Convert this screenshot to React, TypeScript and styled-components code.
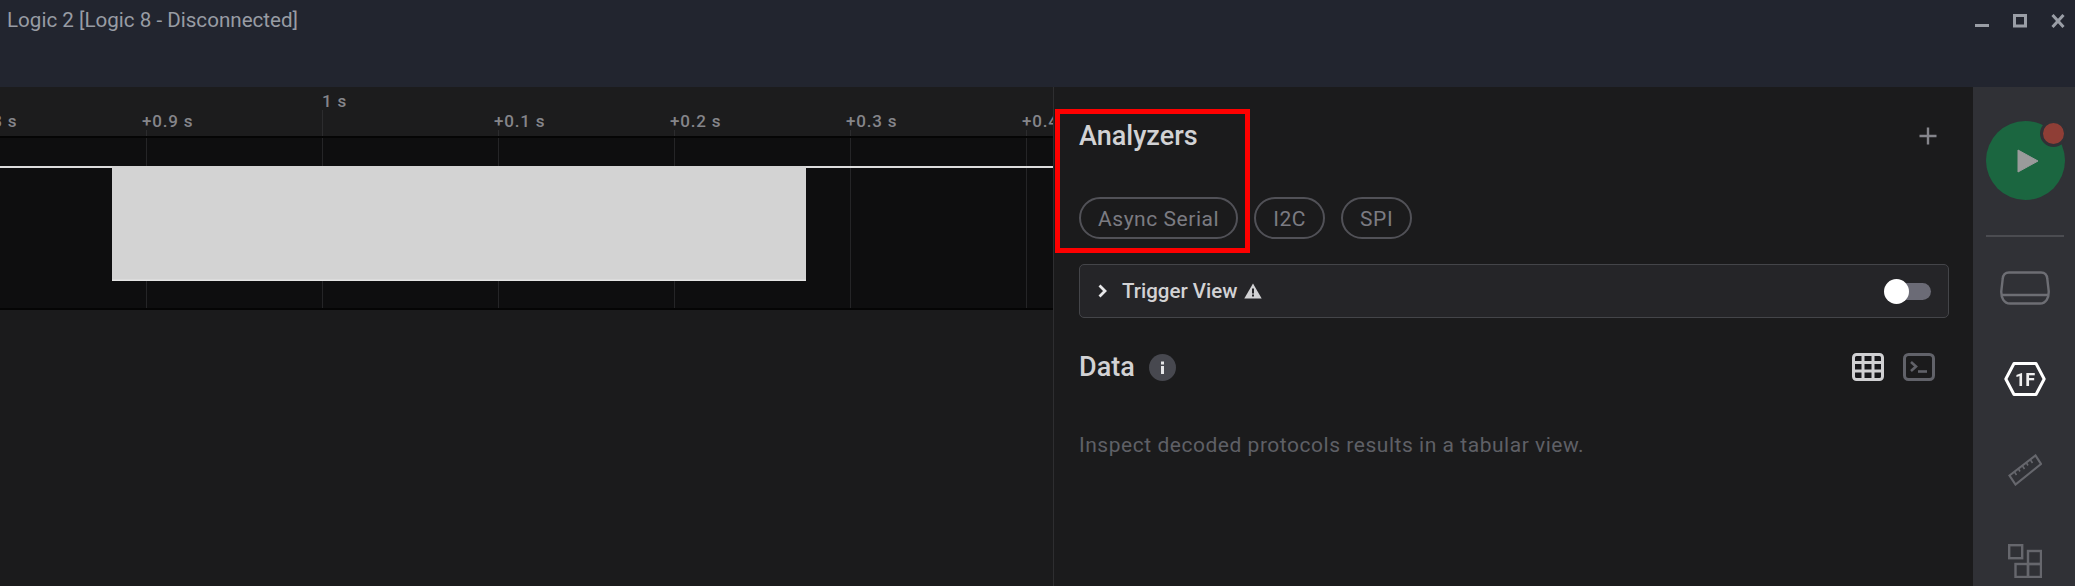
import React from "react";
import styled, { createGlobalStyle } from "styled-components";

const Global = createGlobalStyle`
  html, body { margin: 0; padding: 0; height: 586px; overflow: hidden; background: #1b1b1c; }
  #root { height: 586px; }
  * { box-sizing: border-box; }
`;

const Page = styled.div`
  width: 2075px;
  height: 586px;
  display: grid;
  grid-template-rows: 87px 1fr;
  font-family: Roboto, "Liberation Sans", sans-serif;
  filter: blur(0.4px);
`;

const TitleBar = styled.header`
  background: #22252f;
  display: flex;
  align-items: flex-start;
  justify-content: space-between;
  padding: 8px 10px 0 7px;
`;

const AppTitle = styled.div`
  font-size: 20.6px;
  line-height: 24px;
  color: #989ca4;
`;

const WindowControls = styled.div`
  display: flex;
  gap: 24px;
  padding-top: 6px;
`;

const Body = styled.div`
  display: grid;
  grid-template-columns: 1053px 1fr 102px;
  min-height: 0;
`;

const Timeline = styled.section`
  background: #1b1b1c;
  overflow: hidden;
`;

const Ruler = styled.div`
  position: relative;
  height: 49px;
  background: #1c1c1d;
`;

const TickLabel = styled.span<{ $major?: boolean }>`
  position: absolute;
  top: ${(p) => (p.$major ? "4px" : "24px")};
  font-size: 17px;
  font-weight: 500;
  line-height: 20px;
  letter-spacing: 0.8px;
  color: #85858a;
  white-space: nowrap;
`;

const Tick = styled.i<{ $major?: boolean }>`
  position: absolute;
  bottom: 0;
  width: 1px;
  height: ${(p) => (p.$major ? "26px" : "6px")};
  background: #2c2c2e;
`;

const Channel = styled.div`
  height: 174px;
  background: #0e0e0f;
  border-top: 2px solid #050505;
  border-bottom: 2px solid #050505;
  line-height: 0;
`;

const Analysis = styled.section`
  position: relative;
  background: #1b1b1c;
  border-left: 1px solid #2e2e30;
  padding: 0 24px 0 25px;
`;

const Highlight = styled.div`
  position: absolute;
  left: 1px;
  top: 22px;
  width: 195px;
  height: 144px;
  border: 5px solid #fe0000;
  pointer-events: none;
`;

const HeadingRow = styled.div`
  display: flex;
  align-items: center;
  justify-content: space-between;
  height: 44px;
  margin-top: 27px;
`;

const Heading = styled.h2`
  margin: 0;
  font-size: 27px;
  line-height: 34px;
  font-weight: 500;
  color: #d2d2d4;
`;

const AddButton = styled.button`
  width: 18px;
  height: 18px;
  margin-right: 12px;
  padding: 0;
  border: 0;
  background: none;
  line-height: 0;
`;

const Pills = styled.div`
  display: flex;
  gap: 16px;
  margin-top: 39px;
`;

const Pill = styled.span`
  height: 42px;
  padding: 1px 17px 0;
  display: flex;
  align-items: center;
  border: 2px solid #515157;
  border-radius: 21px;
  font-size: 21px;
  color: #7b7b82;
  letter-spacing: 0.55px;
`;

const TriggerCard = styled.div`
  display: flex;
  align-items: center;
  height: 54px;
  margin-top: 25px;
  padding: 0 17px 0 18px;
  background: #252528;
  border: 1.5px solid #444549;
  border-radius: 5px;
`;

const TriggerLabel = styled.span`
  margin-left: 15px;
  font-size: 20.5px;
  font-weight: 500;
  color: #d2d2d4;
`;

const TriggerIcon = styled.span`
  margin-left: 7px;
  line-height: 0;
`;

const Toggle = styled.span`
  position: relative;
  margin-left: auto;
  width: 35px;
  height: 17px;
  border-radius: 9px;
  background: #6b6b76;
`;

const Knob = styled.span`
  position: absolute;
  left: -12px;
  top: -4px;
  width: 25px;
  height: 25px;
  border-radius: 50%;
  background: #fff;
`;

const DataRow = styled.div`
  display: flex;
  align-items: center;
  margin-top: 28px;
  height: 42px;
`;

const InfoBadge = styled.span`
  margin-left: 14px;
  line-height: 0;
`;

const DataTools = styled.div`
  margin-left: auto;
  margin-right: 14px;
  display: flex;
  gap: 19px;
  line-height: 0;
`;

const Hint = styled.p`
  margin: 44px 0 0;
  font-size: 21px;
  line-height: 26px;
  color: #5f6066;
  letter-spacing: 0.53px;
`;

const Sidebar = styled.nav`
  background: #303136;
  display: flex;
  flex-direction: column;
  align-items: center;
  padding-top: 34px;
`;

const RunButton = styled.button`
  position: relative;
  flex: none;
  width: 79px;
  height: 79px;
  margin-left: 2px;
  padding: 0 0 0 6px;
  border: 0;
  border-radius: 50%;
  background: #1b6640;
  line-height: 0;
`;

const StatusDot = styled.span`
  position: absolute;
  top: -1px;
  right: -2px;
  width: 27px;
  height: 27px;
  border-radius: 50%;
  background: #8f3e36;
  border: 3px solid #303136;
`;

const Divider = styled.hr`
  flex: none;
  width: 78px;
  height: 1.5px;
  margin: 35px 0 34px 2px;
  border: 0;
  background: #4b4c51;
`;

const NavIcons = styled.div`
  display: flex;
  flex-direction: column;
  align-items: center;
  gap: 57px;
  margin-left: 2px;
`;

const NavSlot = styled.span`
  height: 34px;
  display: flex;
  align-items: center;
  justify-content: center;
`;

const TICK_START = 146;
const TICK_STEP = 176;
const ticks = [
  { label: "+0.8 s", i: -1 },
  { label: "+0.9 s", i: 0 },
  { label: "1 s", i: 1, major: true },
  { label: "+0.1 s", i: 2 },
  { label: "+0.2 s", i: 3 },
  { label: "+0.3 s", i: 4 },
  { label: "+0.4 s", i: 5 },
];

const Waveform = () => (
  <svg width="1053" height="170" viewBox="0 0 1053 170">
    {ticks.filter((t) => t.i >= 0).map((t) => (
      <rect key={t.i} x={TICK_START + t.i * TICK_STEP} y="0" width="1" height="170" fill="#252527" />
    ))}
    <rect x="0" y="28" width="1053" height="2" fill="#dcdcdc" />
    <rect x="112" y="28" width="694" height="115" fill="#d3d3d3" />
    <rect x="112" y="141.5" width="694" height="1.5" fill="#e4e4e4" />
  </svg>
);

const Minimize = () => (
  <svg width="14" height="14" viewBox="0 0 14 14"><rect x="0" y="10" width="14" height="3" fill="#9a9ea6" /></svg>
);
const Maximize = () => (
  <svg width="14" height="14" viewBox="0 0 14 14"><rect x="1.5" y="1.5" width="11" height="10.5" fill="none" stroke="#9a9ea6" strokeWidth="3" /></svg>
);
const Close = () => (
  <svg width="14" height="14" viewBox="0 0 14 14"><path d="M1.5 1 L12.5 13 M12.5 1 L1.5 13" stroke="#9a9ea6" strokeWidth="3" /></svg>
);

const Plus = () => (
  <svg width="18" height="18" viewBox="0 0 18 18"><path d="M9 0.5V17.5M0.5 9H17.5" stroke="#85858b" strokeWidth="2.4" /></svg>
);

const Chevron = () => (
  <svg width="9" height="14" viewBox="0 0 9 14"><path d="M1.5 1.5 L7 7 L1.5 12.5" fill="none" stroke="#e8e8ea" strokeWidth="2.8" /></svg>
);

const Warning = () => (
  <svg width="18" height="16" viewBox="0 0 18 16">
    <path d="M9 0.5 L17.7 15.5 H0.3 Z" fill="#d2d2d4" />
    <rect x="8" y="5.5" width="2" height="5" fill="#252528" />
    <rect x="8" y="11.5" width="2" height="2" fill="#252528" />
  </svg>
);

const Info = () => (
  <svg width="27" height="27" viewBox="0 0 27 27">
    <circle cx="13.5" cy="13.5" r="13.5" fill="#47484f" />
    <rect x="12" y="12" width="3" height="8" fill="#e6e6e8" />
    <rect x="12" y="7.5" width="3" height="3" fill="#e6e6e8" />
  </svg>
);

const TableIcon = () => (
  <svg width="32" height="28" viewBox="0 0 32 28">
    <rect x="1.5" y="1.5" width="29" height="25" rx="3" fill="#17171a" stroke="#d0d0d2" strokeWidth="3" />
    <path d="M1 9.5H31M1 18H31M11 1V27M21 1V27" stroke="#d0d0d2" strokeWidth="3" />
  </svg>
);

const TerminalIcon = () => (
  <svg width="32" height="28" viewBox="0 0 32 28">
    <rect x="1.5" y="1.5" width="29" height="25" rx="4" fill="none" stroke="#616269" strokeWidth="3" />
    <path d="M8 9 L13 13.5 L8 18" fill="none" stroke="#616269" strokeWidth="2.6" />
    <path d="M15 18.5H24" stroke="#616269" strokeWidth="2.6" />
  </svg>
);

const Play = () => (
  <svg width="22" height="24" viewBox="0 0 22 24"><path d="M1 1 L21 12 L1 23 Z" fill="#9a9b9b" stroke="#9a9b9b" strokeLinejoin="round" /></svg>
);

const DeviceIcon = () => (
  <svg width="50" height="34" viewBox="0 0 50 34" fill="none" stroke="#6d6e74" strokeWidth="2.4">
    <path d="M9 1.5H41C45 1.5 47 4 47.3 8L48.7 20C49 27 46 32.5 40 32.5H10C4 32.5 1 27 1.3 20L2.7 8C3 4 5 1.5 9 1.5Z" />
    <path d="M2 24H48" />
  </svg>
);

const HexIcon = () => (
  <svg width="42" height="34" viewBox="0 0 42 34">
    <path d="M10 1.5H32L40.2 17L32 32.5H10L1.8 17Z" fill="none" stroke="#fff" strokeWidth="3" strokeLinejoin="round" />
    <text x="21" y="23.5" textAnchor="middle" fontFamily="Roboto, sans-serif" fontWeight="700" fontSize="18" fill="#f0f0f0">1F</text>
  </svg>
);

const RulerIcon = () => (
  <svg width="34" height="32" viewBox="0 0 34 32" fill="none" stroke="#66676d" strokeWidth="2.2">
    <path d="M1.5 21.5 L27.5 1.5 L33 10 L7.5 30.5 Z" />
    <path d="M6.5 18 L8.5 21 M10.5 15 L12 17.5 M14.5 12 L16.5 15 M18.5 9 L20 11.5 M22.5 6 L24.5 9" strokeWidth="1.6" />
  </svg>
);

const WidgetsIcon = () => (
  <svg width="34" height="34" viewBox="0 0 34 34" fill="none" stroke="#66676d" strokeWidth="2.4">
    <rect x="1.2" y="1.2" width="13" height="13" />
    <rect x="20" y="7" width="13" height="13" />
    <rect x="7.5" y="20" width="12.5" height="13" />
    <rect x="20" y="20" width="13" height="13" />
  </svg>
);

export default function App() {
  return (
    <Page>
      <Global />
      <TitleBar>
        <AppTitle>Logic 2 [Logic 8 - Disconnected]</AppTitle>
        <WindowControls>
          <Minimize />
          <Maximize />
          <Close />
        </WindowControls>
      </TitleBar>
      <Body>
        <Timeline>
          <Ruler>
            {ticks.map((t) => (
              <React.Fragment key={t.i}>
                <TickLabel $major={t.major} style={{ left: TICK_START + t.i * TICK_STEP - (t.major ? 0 : 4) }}>
                  {t.label}
                </TickLabel>
                {t.i >= 0 && <Tick $major={t.major} style={{ left: TICK_START + t.i * TICK_STEP }} />}
              </React.Fragment>
            ))}
          </Ruler>
          <Channel>
            <Waveform />
          </Channel>
        </Timeline>
        <Analysis>
          <Highlight />
          <HeadingRow>
            <Heading>Analyzers</Heading>
            <AddButton><Plus /></AddButton>
          </HeadingRow>
          <Pills>
            <Pill>Async Serial</Pill>
            <Pill>I2C</Pill>
            <Pill>SPI</Pill>
          </Pills>
          <TriggerCard>
            <Chevron />
            <TriggerLabel>Trigger View</TriggerLabel>
            <TriggerIcon><Warning /></TriggerIcon>
            <Toggle><Knob /></Toggle>
          </TriggerCard>
          <DataRow>
            <Heading>Data</Heading>
            <InfoBadge><Info /></InfoBadge>
            <DataTools>
              <TableIcon />
              <TerminalIcon />
            </DataTools>
          </DataRow>
          <Hint>Inspect decoded protocols results in a tabular view.</Hint>
        </Analysis>
        <Sidebar>
          <RunButton>
            <Play />
            <StatusDot />
          </RunButton>
          <Divider />
          <NavIcons>
            <NavSlot><DeviceIcon /></NavSlot>
            <NavSlot><HexIcon /></NavSlot>
            <NavSlot><RulerIcon /></NavSlot>
            <NavSlot><WidgetsIcon /></NavSlot>
          </NavIcons>
        </Sidebar>
      </Body>
    </Page>
  );
}
